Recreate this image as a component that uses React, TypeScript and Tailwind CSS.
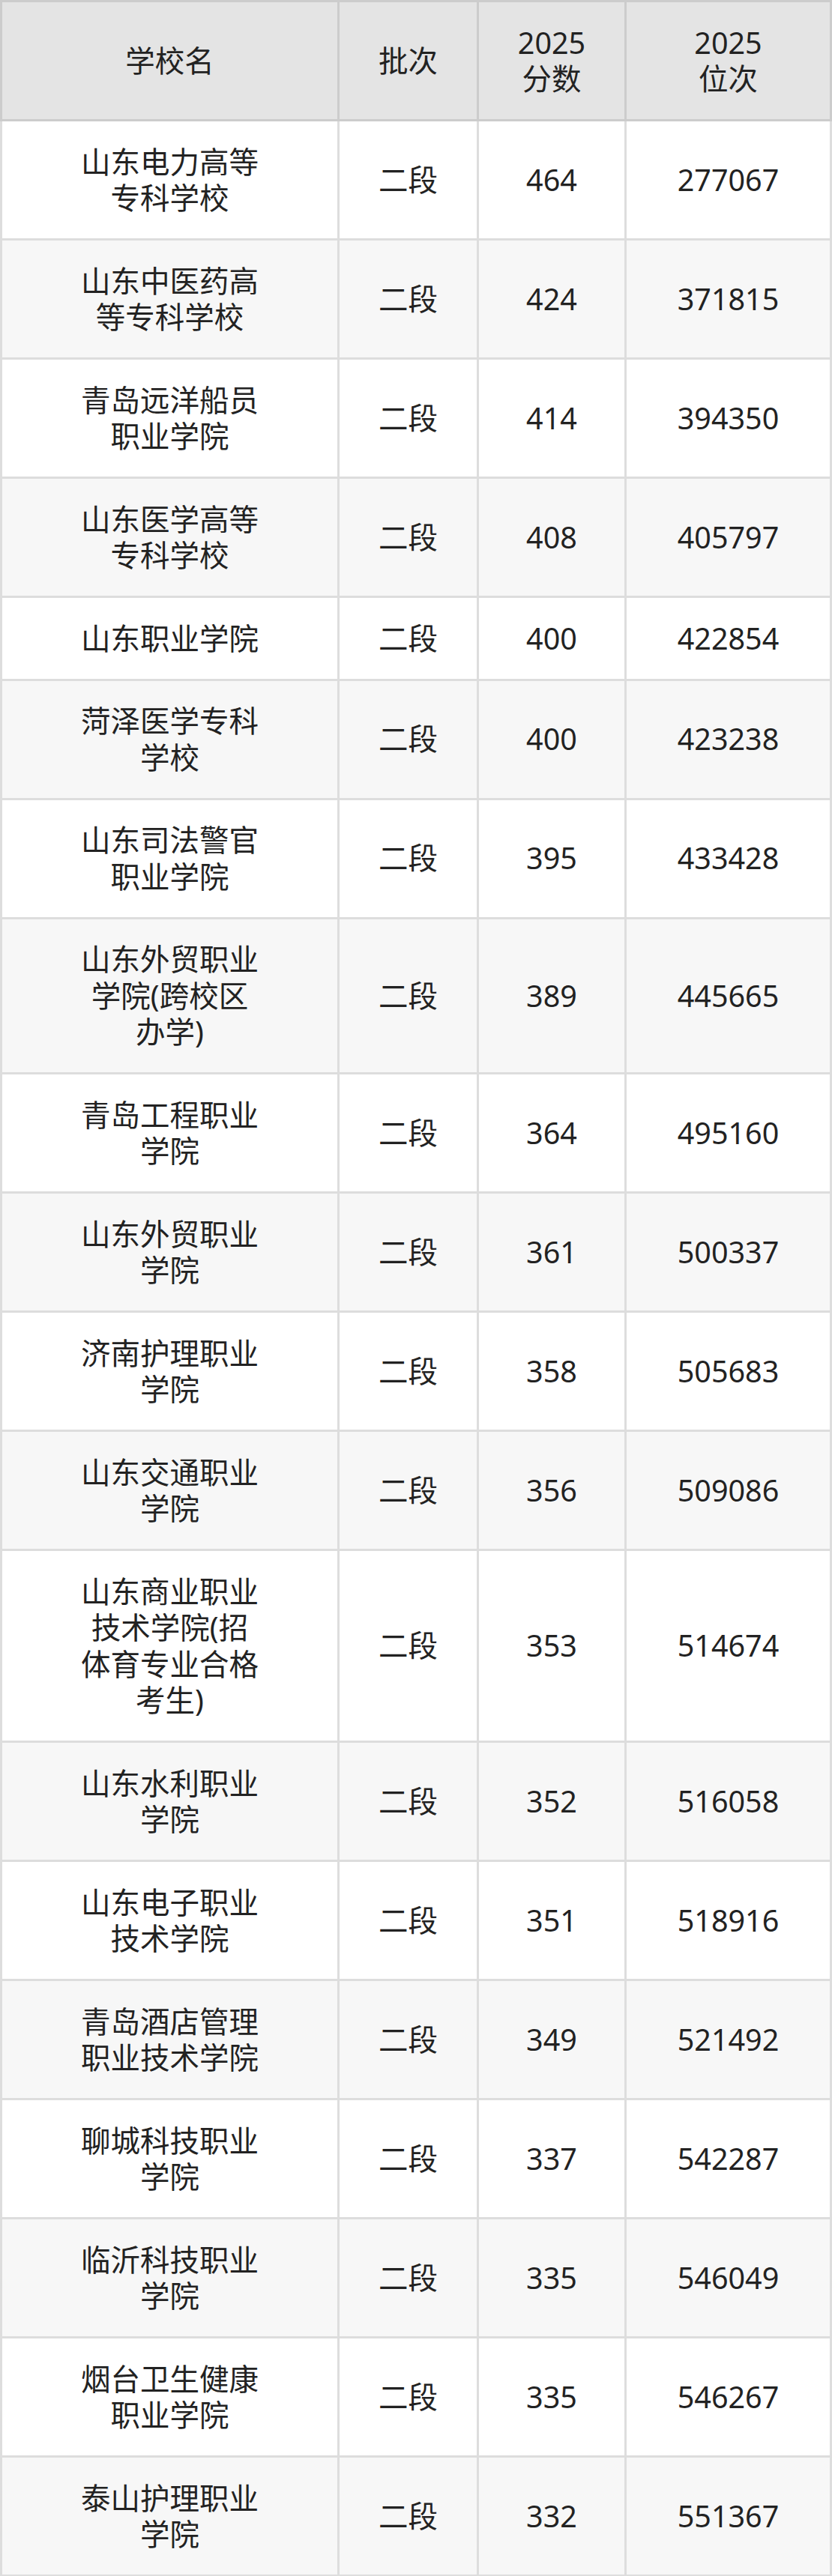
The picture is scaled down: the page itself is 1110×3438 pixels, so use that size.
import React from "react";

type Row = { name: string[]; batch: string; score: string; rank: string };

const rows: Row[] = [
  { name: ["山东电力高等", "专科学校"], batch: "二段", score: "464", rank: "277067" },
  { name: ["山东中医药高", "等专科学校"], batch: "二段", score: "424", rank: "371815" },
  { name: ["青岛远洋船员", "职业学院"], batch: "二段", score: "414", rank: "394350" },
  { name: ["山东医学高等", "专科学校"], batch: "二段", score: "408", rank: "405797" },
  { name: ["山东职业学院"], batch: "二段", score: "400", rank: "422854" },
  { name: ["菏泽医学专科", "学校"], batch: "二段", score: "400", rank: "423238" },
  { name: ["山东司法警官", "职业学院"], batch: "二段", score: "395", rank: "433428" },
  { name: ["山东外贸职业", "学院(跨校区", "办学)"], batch: "二段", score: "389", rank: "445665" },
  { name: ["青岛工程职业", "学院"], batch: "二段", score: "364", rank: "495160" },
  { name: ["山东外贸职业", "学院"], batch: "二段", score: "361", rank: "500337" },
  { name: ["济南护理职业", "学院"], batch: "二段", score: "358", rank: "505683" },
  { name: ["山东交通职业", "学院"], batch: "二段", score: "356", rank: "509086" },
  { name: ["山东商业职业", "技术学院(招", "体育专业合格", "考生)"], batch: "二段", score: "353", rank: "514674" },
  { name: ["山东水利职业", "学院"], batch: "二段", score: "352", rank: "516058" },
  { name: ["山东电子职业", "技术学院"], batch: "二段", score: "351", rank: "518916" },
  { name: ["青岛酒店管理", "职业技术学院"], batch: "二段", score: "349", rank: "521492" },
  { name: ["聊城科技职业", "学院"], batch: "二段", score: "337", rank: "542287" },
  { name: ["临沂科技职业", "学院"], batch: "二段", score: "335", rank: "546049" },
  { name: ["烟台卫生健康", "职业学院"], batch: "二段", score: "335", rank: "546267" },
  { name: ["泰山护理职业", "学院"], batch: "二段", score: "332", rank: "551367" },
];

const cell =
  "flex flex-col items-center justify-center text-center py-[29.5px] leading-[48.5px]";

function Lines({ lines }: { lines: string[] }) {
  return (
    <>
      {lines.map((l, i) => (
        <span key={i} className="block whitespace-nowrap">
          {l}
        </span>
      ))}
    </>
  );
}

export default function App() {
  return (
    <div
      className="w-[1110px] bg-white text-[39.5px] text-[#222222]"
      style={{ fontFamily: '"Noto Sans", "Noto Sans CJK SC", sans-serif' }}
    >
      <div className="flex bg-[#e4e4e4] border-t-[3px] border-b-[3px] border-[#cccccc]">
        <div className={`${cell} w-[453px] border-l-[3px] border-r-[3px] border-[#cccccc]`}>
          <span>学校名</span>
        </div>
        <div className={`${cell} w-[186px] border-r-[3px] border-[#cccccc]`}>
          <span>批次</span>
        </div>
        <div className={`${cell} w-[197px] border-r-[3px] border-[#cccccc]`}>
          <Lines lines={["2025", "分数"]} />
        </div>
        <div className={`${cell} w-[274px] border-r-[3px] border-[#cccccc]`}>
          <Lines lines={["2025", "位次"]} />
        </div>
      </div>
      {rows.map((r, i) => (
        <div
          key={i}
          className={`flex border-b-[3px] border-[#dddddd] ${
            i % 2 === 0 ? "bg-white" : "bg-[#f7f7f7]"
          }`}
        >
          <div className={`${cell} w-[453px] border-l-[3px] border-r-[3px] border-[#dddddd]`}>
            <Lines lines={r.name} />
          </div>
          <div className={`${cell} w-[186px] border-r-[3px] border-[#dddddd]`}>
            <span>{r.batch}</span>
          </div>
          <div className={`${cell} w-[197px] border-r-[3px] border-[#dddddd]`}>
            <span>{r.score}</span>
          </div>
          <div className={`${cell} w-[274px] border-r-[3px] border-[#dddddd]`}>
            <span>{r.rank}</span>
          </div>
        </div>
      ))}
    </div>
  );
}
